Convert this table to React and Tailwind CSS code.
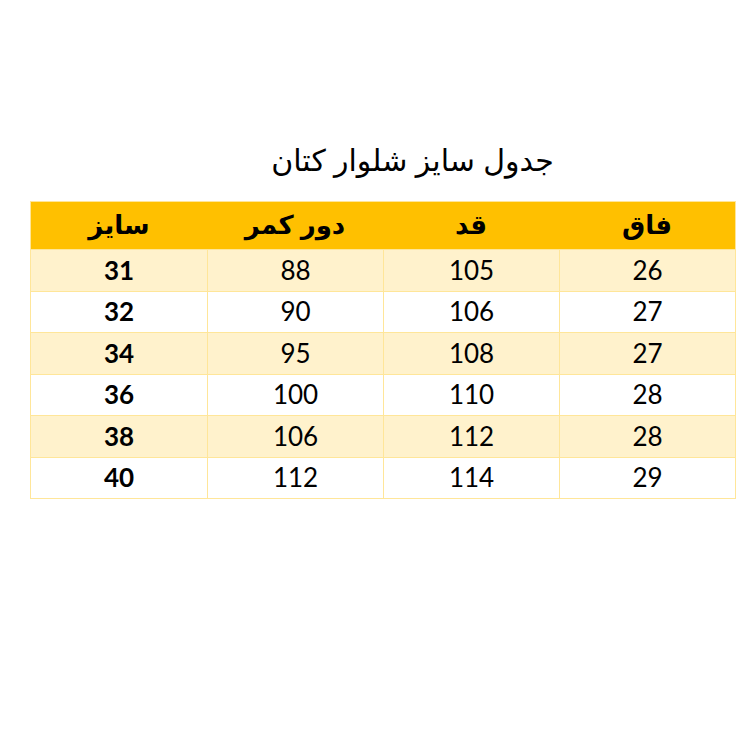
import React from 'react';

const headers = ['سایز', 'دور کمر', 'قد', 'فاق'];

const rows = [
  ['31', '88', '105', '26'],
  ['32', '90', '106', '27'],
  ['34', '95', '108', '27'],
  ['36', '100', '110', '28'],
  ['38', '106', '112', '28'],
  ['40', '112', '114', '29'],
];

const arabicFont = { fontFamily: '"Liberation Sans", "DejaVu Sans", sans-serif' };

export default function App() {
  return (
    <div className="w-[755px] h-[755px] bg-white flex flex-col">
      <div className="pt-[141px] h-[201px] flex justify-center pl-[70px]">
        <h1 dir="rtl" className="text-[30px] leading-[40px] text-black font-normal" style={arabicFont}>
          جدول سایز شلوار کتان
        </h1>
      </div>
      <div className="ml-[30px] w-[706px] border border-[#ffe699]">
        <div className="grid grid-cols-4 h-[47px] bg-[#ffc000]">
          {headers.map((h) => (
            <div key={h} dir="rtl" className="flex items-center justify-center text-[26px] font-bold text-black" style={arabicFont}>
              {h}
            </div>
          ))}
        </div>
        {rows.map((r, i) => (
          <div key={i} className={`grid grid-cols-4 h-[41.5px] border-t border-[#ffe699] ${i % 2 === 0 ? 'bg-[#fff2cc]' : 'bg-white'}`}>
            {r.map((c, j) => (
              <div
                key={j}
                className={`flex items-center justify-center text-[26px] text-black font-['Lato',sans-serif] ${j === 0 ? 'font-bold' : 'font-normal'} ${j > 0 ? 'border-l border-[#ffe699]' : ''}`}
              >
                {c}
              </div>
            ))}
          </div>
        ))}
      </div>
    </div>
  );
}
